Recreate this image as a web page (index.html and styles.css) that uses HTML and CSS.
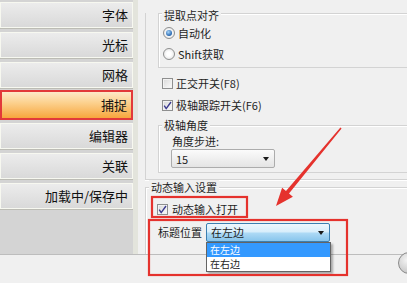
FILE: index.html
```html
<!DOCTYPE html>
<html lang="zh-CN">
<head>
  <meta charset="UTF-8" />
  <title>草图设置 - 捕捉</title>
  <link rel="stylesheet" href="styles.css">
</head>
<body>

  <div class="main">
    <!-- Left: category buttons -->
    <div class="sidebar">
      <div class="nav-btn">字体</div>
      <div class="nav-btn">光标</div>
      <div class="nav-btn">网格</div>
      <div class="nav-btn active">捕捉</div>
      <div class="nav-btn">编辑器</div>
      <div class="nav-btn">关联</div>
      <div class="nav-btn">加载中/保存中</div>
    </div>

    <!-- Right: snap settings -->
    <div class="settings">
      <div class="outer-group">
        <div class="group group-snap">
          <div class="group-title">提取点对齐</div>
          <label class="radio-row"><span class="radio checked"></span>自动化</label>
          <label class="radio-row"><span class="radio"></span>Shift获取</label>
        </div>

        <div class="check-list">
          <label class="check-row"><span class="check"></span>正交开关(F8)</label>
          <label class="check-row">
            <span class="check"><svg width="9" height="9" viewBox="0 0 9 9"><path d="M1.2 4.6 L3.2 7.6 L8 1" fill="none" stroke="#3b3a8f" stroke-width="1.4"/></svg></span>极轴跟踪开关(F6)
          </label>
        </div>

        <div class="group group-polar">
          <div class="group-title">极轴角度</div>
          <div class="field-label">角度步进:</div>
          <div class="combo combo-angle"><span>15</span><span class="arrow"></span></div>
        </div>
      </div>

      <div class="group group-dyn">
        <div class="group-title">动态输入设置</div>
        <label class="check-row dyn-check">
          <span class="check"><svg width="9" height="9" viewBox="0 0 9 9"><path d="M1.2 4.6 L3.2 7.6 L8 1" fill="none" stroke="#3b3a8f" stroke-width="1.4"/></svg></span>动态输入打开
        </label>
        <div class="title-row">
          <span class="title-label">标题位置</span>
          <div class="combo combo-open">
            <span>在左边</span><span class="arrow"></span>
            <ul class="combo-list">
              <li class="selected">在左边</li>
              <li>在右边</li>
            </ul>
          </div>
        </div>
      </div>
    </div>
  </div>

  <div class="footer"><span class="help-btn"></span></div>

  <!-- Red annotation marks drawn over the dialog -->
  <svg class="annotations" width="407" height="283" viewBox="0 0 407 283">
    <rect x="152" y="197" width="95" height="20" fill="none" stroke="#e5322d" stroke-width="2.2"/>
    <rect x="149" y="220" width="198" height="55" fill="none" stroke="#e5322d" stroke-width="2.2"/>
    <polygon points="340.4,127.5 341.6,128.5 289,193.5 292.9,196.7 276,206 282.1,187.7 286,190.9" fill="#e5322d"/>
  </svg>

</body>
</html>
```

FILE: styles.css
```css
* {
  box-sizing: border-box;
}
html, body {
  margin: 0;
  overflow: hidden;
}
body {
  width: 407px;
  height: 283px;
  position: relative;
  background-color: #f0f0f0;
  font-family: "Noto Sans CJK SC", "Noto Sans", sans-serif;
  font-size: 11px;
  color: #1e1e1e;
}
/* Layout */
.main {
  display: flex;
  height: 254px;
}
.sidebar {
  width: 138px;
  flex-shrink: 0;
  background-color: #d4d4d4;
  border-right: 5px solid #e3e4dc;
  padding-top: 2px;
  display: flex;
  flex-direction: column;
  gap: 4px;
}
.nav-btn {
  height: 26px;
  font-size: 13px;
  line-height: 24px;
  text-align: right;
  padding-right: 4px;
  color: #111;
  background: linear-gradient(#ececec, #d9d9d9);
  border: 1px solid #f7f8f0;
  box-shadow: 0 1px 0 #bcbcb4;
}
.nav-btn.active {
  height: 30px;
  line-height: 26px;
  margin: -2px 0 -1px;
  background: linear-gradient(#fde9c8 0%, #fcd290 40%, #f7a63d 100%);
  border: 2px solid #e2393a;
  box-shadow: none;
}
.settings {
  flex: 1;
  padding-left: 7px;
}
/* Group boxes (right edges run off the window) */
.outer-group {
  border-left: 1px solid #d3d3d3;
  border-bottom: 1px solid #d3d3d3;
  box-shadow: 0 1px 0 #fff;
  padding-bottom: 6px;
}
.group {
  border: 1px solid #d3d3d3;
  border-right: none;
  box-shadow: inset 1px 1px 0 #fff;
}
.group-title {
  width: max-content;
  margin: -8px 0 0 3px;
  padding: 0 2px;
  line-height: 14px;
  background-color: #f0f0f0;
}
.group-snap {
  margin: 13px 0 0 12px;
  padding-top: 2px;
  padding-bottom: 3px;
}
.group-polar {
  margin: 9px 0 0 12px;
  padding-bottom: 4px;
}
.group-dyn {
  margin-top: 7px;
  border-bottom: none;
  padding-bottom: 12px;
}
/* Radios and checkboxes */
.radio-row, .check-row {
  display: flex;
  align-items: center;
  gap: 3px;
}
.radio-row {
  height: 21px;
  padding-left: 4px;
}
.radio {
  width: 12px;
  height: 12px;
  border-radius: 50%;
  border: 1px solid #8e8f8f;
  background: radial-gradient(circle, #ffffff 30%, #dcdcdc 100%);
  display: flex;
  align-items: center;
  justify-content: center;
}
.radio.checked::after {
  content: "";
  width: 6px;
  height: 6px;
  border-radius: 50%;
  background: radial-gradient(circle at 40% 35%, #a8d6fa, #1b5ca8 75%);
}
.check-list {
  margin-top: 4px;
  padding-left: 16px;
}
.check-row {
  height: 22px;
}
.check {
  width: 11px;
  height: 11px;
  border: 1px solid #8e8f8f;
  background: linear-gradient(135deg, #d8d8d8, #fbfbfb);
  box-shadow: inset 0 0 0 1px #f2f2f2;
  display: flex;
  align-items: center;
  justify-content: center;
}
.dyn-check {
  margin-top: 4px;
  padding-left: 11px;
  gap: 4px;
}
.field-label {
  margin-top: 2px;
  padding-left: 13px;
  line-height: 14px;
}
/* Combo boxes */
.combo {
  position: relative;
  height: 19px;
  display: flex;
  align-items: center;
  justify-content: space-between;
  padding: 0 5px 0 4px;
  border-radius: 2px;
}
.combo-angle {
  width: 104px;
  margin: 1px 0 0 12px;
  border: 1px solid #acacac;
  background: linear-gradient(#fbfbfb, #e4e4e4);
}
.combo-open {
  width: 124px;
  border: 1px solid #3c7fb1;
  background: linear-gradient(#eef7fd 0%, #d8eefb 45%, #acd9f5 55%, #88c5ec 100%);
}
.arrow {
  border-left: 3.5px solid transparent;
  border-right: 3.5px solid transparent;
  border-top: 4px solid #1a1a1a;
}
.title-row {
  display: flex;
  align-items: flex-start;
  gap: 4px;
  height: 22px;
  padding: 3px 0 0 12px;
  line-height: 19px;
}
.combo-list {
  position: absolute;
  top: 18px;
  left: -1px;
  width: 125px;
  margin: 0;
  padding: 0;
  list-style: none;
  background-color: #fff;
  border: 1px solid #646464;
  box-shadow: 2px 2px 2px rgba(0, 0, 0, 0.3);
  z-index: 2;
}
.combo-list li {
  height: 14px;
  font-size: 10px;
  line-height: 14px;
  padding-left: 3px;
}
.combo-list li.selected {
  background-color: #3399ff;
  color: #fff;
}
/* Bottom strip */
.footer {
  height: 29px;
  border-top: 1px solid #bdbdbd;
  display: flex;
  justify-content: flex-end;
}
.help-btn {
  width: 22px;
  height: 22px;
  margin: -3px -13px 0 0;
  border-radius: 50%;
  border: 1px solid #8a8a8a;
  background: radial-gradient(circle at 40% 35%, #f4f4f4, #b8b8b8);
}
/* Annotations */
.annotations {
  position: absolute;
  top: 0;
  left: 0;
  pointer-events: none;
  z-index: 5;
}
```
